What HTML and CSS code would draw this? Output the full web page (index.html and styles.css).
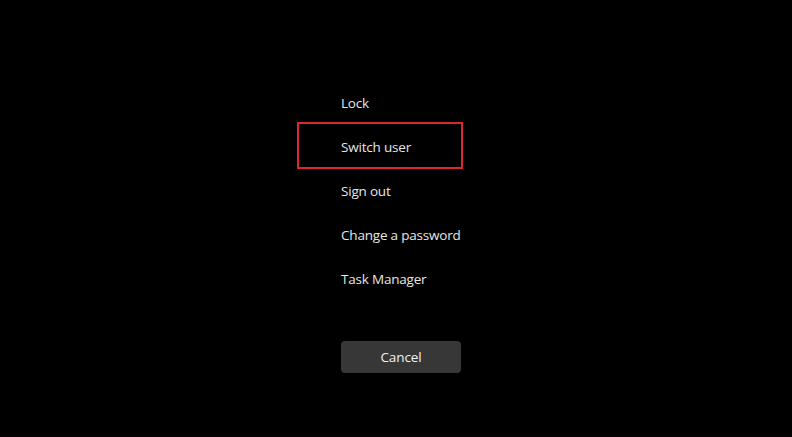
FILE: index.html
```html
<!DOCTYPE html>
<html>
<head>
<meta charset="utf-8">
<link rel="stylesheet" href="styles.css">
</head>
<body>
<div class="menu">
  <div class="item">Lock</div>
  <div class="item selected">Switch user</div>
  <div class="item">Sign out</div>
  <div class="item">Change a password</div>
  <div class="item">Task Manager</div>
  <button class="cancel">Cancel</button>
</div>
</body>
</html>
```
FILE: styles.css
```css
html, body {
  margin: 0;
  background: #000;
  height: 100%;
}
body {
  font-family: "Open Sans", "Noto Sans", sans-serif;
}
.menu {
  display: flex;
  flex-direction: column;
  padding-top: 81px;
  padding-left: 341px;
  width: 120px;
}
.item {
  position: relative;
  height: 44px;
  display: flex;
  align-items: center;
  color: #e6e6e6;
  font-size: 13.5px;
  letter-spacing: -0.2px;
  white-space: nowrap;
}
.selected::after {
  content: "";
  position: absolute;
  top: -3px;
  bottom: 0;
  left: -44px;
  right: -2px;
  border: 2px solid #dc2630;
}
.cancel {
  margin-top: 40px;
  width: 120px;
  height: 32px;
  border: none;
  border-radius: 4px;
  background: #373737;
  color: #f2f2f2;
  font-family: "Open Sans", "Noto Sans", sans-serif;
  font-size: 13.5px;
  letter-spacing: -0.1px;
  padding: 0;
}
```
